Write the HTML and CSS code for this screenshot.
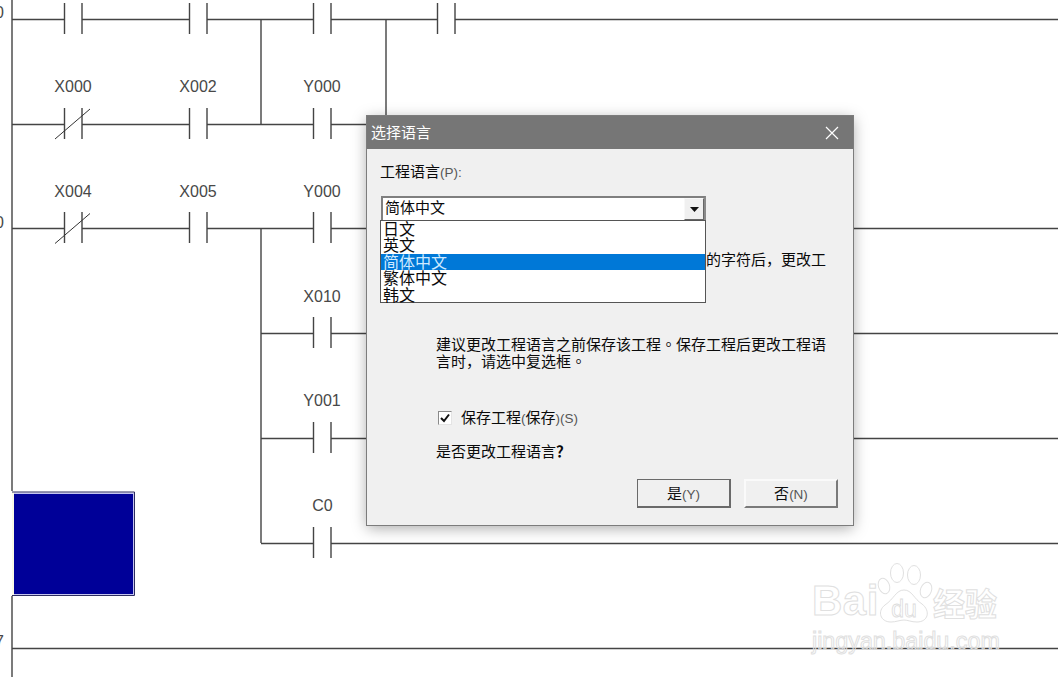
FILE: index.html
```html
<!DOCTYPE html>
<html lang="zh">
<head>
<meta charset="utf-8">
<title>选择语言</title>
<link rel="stylesheet" href="styles.css">
</head>
<body>
<svg class="ladder" width="1058" height="677" viewBox="0 0 1058 677">
  <defs>
    <path id="no" d="M0 -16V15M17.5 -16V15"/>
    <path id="nc" d="M0 -16V15M17.5 -16V15"/>
  </defs>
  <g class="wire">
    <path d="M12 0V491M12 596V677"/>
    <path d="M12 19.5H64.5M82 19.5H189.5M207 19.5H313.5M331 19.5H437.5M455 19.5H1058"/>
    <path d="M12 124.5H64.5M82 124.5H189.5M207 124.5H313.5M331 124.5H386"/>
    <path d="M12 228.5H64.5M82 228.5H189.5M207 228.5H313.5M331 228.5H1058"/>
    <path d="M261 333.5H313.5M331 333.5H1058"/>
    <path d="M261 438.5H313.5M331 438.5H1058"/>
    <path d="M261 543.5H313.5M331 543.5H1058"/>
    <path d="M12 648.5H1058"/>
    <path d="M261 19V124M386 19V124M261 228V543"/>
    <use href="#no" x="64.5" y="19"/><use href="#no" x="189.5" y="19"/><use href="#no" x="313.5" y="19"/><use href="#no" x="437.5" y="19"/>
    <use href="#nc" x="64.5" y="124"/><use href="#no" x="189.5" y="124"/><use href="#no" x="313.5" y="124"/>
    <use href="#nc" x="64.5" y="228"/><use href="#no" x="189.5" y="228"/><use href="#no" x="313.5" y="228"/>
    <use href="#no" x="313.5" y="333"/><use href="#no" x="313.5" y="438"/><use href="#no" x="313.5" y="543"/>
  </g>
  <path class="slash" d="M55 139L90 109M55 243.500L90 213.500"/>
  <g class="tag">
    <text x="73" y="92">X000</text><text x="198" y="92">X002</text><text x="322" y="92">Y000</text>
    <text x="73" y="197">X004</text><text x="198" y="197">X005</text><text x="322" y="197">Y000</text>
    <text x="322" y="302">X010</text><text x="322" y="406">Y001</text><text x="322.500" y="511">C0</text>
  </g>
  <g class="step">
    <text x="-5" y="18">0</text><text x="-5" y="228">0</text><text x="-5" y="647">7</text>
  </g>
  <rect class="cursor-gutter" x="12" y="492" width="3" height="104"/>
  <rect class="cursor-light" x="14" y="492.500" width="120" height="103"/>
  <path class="cursor-edge" d="M12 492H134.500V595.500H12"/>
  <rect class="cursor-fill" x="14" y="494" width="119" height="100"/>
</svg>

<section class="dialog">
  <header class="titlebar">
    <span class="title-text">选择语言</span>
    <svg class="close" width="14" height="14" viewBox="0 0 14 14"><path d="M1 1L13 13M13 1L1 13"/></svg>
  </header>
  <div class="dialog-body">
    <div class="label">工程语言<span class="latin">(P):</span></div>
    <div class="combo">
      <span class="combo-text">简体中文</span>
      <span class="combo-arrow"><svg width="9" height="5" viewBox="0 0 9 5"><path d="M0 0H9L4.5 5Z"/></svg></span>
    </div>
    <ul class="dropdown">
      <li>日文</li>
      <li>英文</li>
      <li class="selected">简体中文</li>
      <li>繁体中文</li>
      <li>韩文</li>
    </ul>
    <div class="hidden-line">的字符后，更改工</div>
    <p class="note">建议更改工程语言之前保存该工程<span class="tc" lang="zh-TW">。</span>保存工程后更改工程语言时，请选中复选框<span class="tc" lang="zh-TW">。</span></p>
    <label class="check-row">
      <span class="checkbox"><svg width="10" height="10" viewBox="0 0 10 10"><path d="M1 5L4 8L9 1.5"/></svg></span>
      <span>保存工程<span class="latin">(</span>保存<span class="latin">)(S)</span></span>
    </label>
    <div class="question">是否更改工程语言<span class="qmark">？</span></div>
    <div class="buttons">
      <button class="btn btn-default">是<span class="latin">(Y)</span></button>
      <button class="btn">否<span class="latin">(N)</span></button>
    </div>
  </div>
</section>

<div class="watermark">
  <div class="wm-top">
    <span class="wm-bai">Bai</span>
    <svg class="wm-paw" width="57" height="62" viewBox="0 0 57 62">
      <g class="wm-shape">
        <ellipse cx="8" cy="23" rx="5.500" ry="8" transform="rotate(-20 8 23)"/>
        <ellipse cx="21" cy="10" rx="6.500" ry="9.500"/>
        <ellipse cx="38" cy="12" rx="6.500" ry="9.500"/>
        <ellipse cx="50" cy="27" rx="5.500" ry="8" transform="rotate(20 50 27)"/>
        <path d="M28 27C36 27 38 36 46 41C55 48 52 59 41 59C35 59 32 57 28 57C24 57 20 59 15 59C4 59 1 48 9 42C18 36 20 27 28 27Z"/>
      </g>
      <text class="wm-du" x="28" y="54">du</text>
    </svg>
    <span class="wm-cn">经验</span>
  </div>
  <div class="wm-url">jingyan.baidu.com</div>
</div>
</body>
</html>
```
FILE: styles.css
```css
* { box-sizing: border-box; }
html, body { margin: 0; padding: 0; }
body {
  position: relative;
  width: 1058px;
  height: 677px;
  overflow: hidden;
  background: #fff;
  font-family: "Noto Sans CJK SC", "Liberation Sans", sans-serif;
}
.ladder { display: block; }
.wire { fill: none; stroke: #444; stroke-width: 1.4; }
.slash { fill: none; stroke: #333; stroke-width: 1; }
.tag text, .step text {
  font-family: "Liberation Sans", sans-serif;
  font-size: 16px;
  fill: #484848;
}
.tag text { text-anchor: middle; }
.cursor-gutter { fill: #fafae8; }
.cursor-light { fill: #c4c4f0; }
.cursor-edge { fill: none; stroke: #2c2c60; stroke-width: 1; }
.cursor-fill { fill: #000098; }

.dialog {
  position: absolute;
  left: 367px;
  top: 116px;
  width: 486px;
  height: 409px;
  background: #f0f0f0;
  box-shadow: 0 0 0 1px #7c7c7c, 0 3px 14px rgba(0, 0, 0, .35);
  font-size: 15px;
  line-height: 17px;
  color: #0a0a0a;
}
.titlebar {
  display: flex;
  align-items: center;
  justify-content: space-between;
  height: 33px;
  padding: 0 14px 0 4px;
  background: #767676;
  color: #fff;
}
.title-text { margin-bottom: 3px; }
.close path { fill: none; stroke: #fff; stroke-width: 1.2; }
.dialog-body { position: relative; padding: 13px 16px 16px 13px; }
.latin {
  font-family: "Liberation Sans", sans-serif;
  font-size: 13.5px;
  color: #555;
}
.combo {
  display: flex;
  align-items: center;
  justify-content: space-between;
  height: 26px;
  width: 325px;
  margin: 15px 0 0 1px;
  padding: 1px 0 1px 2px;
  background: #fff;
  border: 2px solid;
  border-color: #7f7f7f #8a8a8a #f0f0f0 #7f7f7f;
}
.combo-text { margin-bottom: 6px; }
.combo-arrow {
  display: flex;
  align-items: center;
  justify-content: center;
  width: 20px;
  height: 22px;
  background: #f0f0f0;
  border: 1px solid;
  border-color: #f8f8f8 #666 #666 #f8f8f8;
}
.combo-arrow path { fill: #111; }
.dropdown {
  position: absolute;
  left: 13px;
  top: 71px;
  width: 326px;
  height: 83px;
  margin: 0;
  padding: 0;
  list-style: none;
  background: #fff;
  border: 1px solid #555;
}
.dropdown li {
  height: 16.4px;
  padding-left: 2px;
  font-size: 16px;
  line-height: 15.4px;
  white-space: nowrap;
}
.dropdown .selected { background: #0078d7; color: #cfeaff; }
.hidden-line {
  margin-top: 28px;
  text-align: right;
  padding-right: 11px;
}
.note {
  width: 393px;
  margin: 68px 0 0 56px;
  padding: 0;
}
.tc {
  display: inline-block;
  line-height: 17px;
  font-family: "Noto Sans CJK TC", sans-serif;
}
.check-row {
  display: flex;
  align-items: center;
  gap: 9px;
  margin: 39px 0 0 58px;
}
.checkbox {
  display: flex;
  align-items: center;
  justify-content: center;
  width: 14px;
  height: 14px;
  background: #fff;
  border: 1px solid;
  border-color: #8a8a8a #e4e4e4 #e4e4e4 #8a8a8a;
}
.checkbox path { fill: none; stroke: #111; stroke-width: 2; }
.question { margin: 15px 0 0 56px; }
.qmark { font-weight: 700; }
.buttons {
  display: flex;
  justify-content: flex-end;
  gap: 13px;
  margin-top: 20px;
  margin-right: -1px;
}
.btn {
  width: 94px;
  height: 29px;
  padding: 0;
  font: inherit;
  color: #111;
  background: #f0f0f0;
  border: 2px solid;
  border-color: #fafafa #7a7a7a #7a7a7a #fafafa;
}
.btn-default { border-color: #6a6a6a; border-width: 1px 2px 2px 1px; }

.watermark {
  position: absolute;
  left: 812px;
  top: 563px;
  width: 190px;
  pointer-events: none;
}
.wm-top { display: flex; align-items: flex-end; height: 62px; }
.wm-bai, .wm-url, .wm-cn { -webkit-text-stroke: 1px #e0e0e0; }
.wm-bai, .wm-cn { color: #fff; }
.wm-url { color: transparent; }
.wm-bai {
  font-family: "Liberation Sans", sans-serif;
  font-weight: 700;
  font-size: 42px;
  line-height: 48px;
  width: 64px;
  letter-spacing: .5px;
}
.wm-paw { flex: none; }
.wm-shape { fill: #fff; stroke: #e0e0e0; stroke-width: 1; }
.wm-du {
  font-family: "Liberation Sans", sans-serif;
  font-size: 23px;
  text-anchor: middle;
  fill: #fff;
  stroke: #dcdcdc;
  stroke-width: .8;
}
.wm-cn {
  font-size: 32px;
  line-height: 46px;
  white-space: nowrap;
  font-weight: 700;
}
.wm-url {
  font-family: "Liberation Sans", sans-serif;
  font-size: 23.3px;
  line-height: 24px;
  margin-top: 4px;
  white-space: nowrap;
}
```
